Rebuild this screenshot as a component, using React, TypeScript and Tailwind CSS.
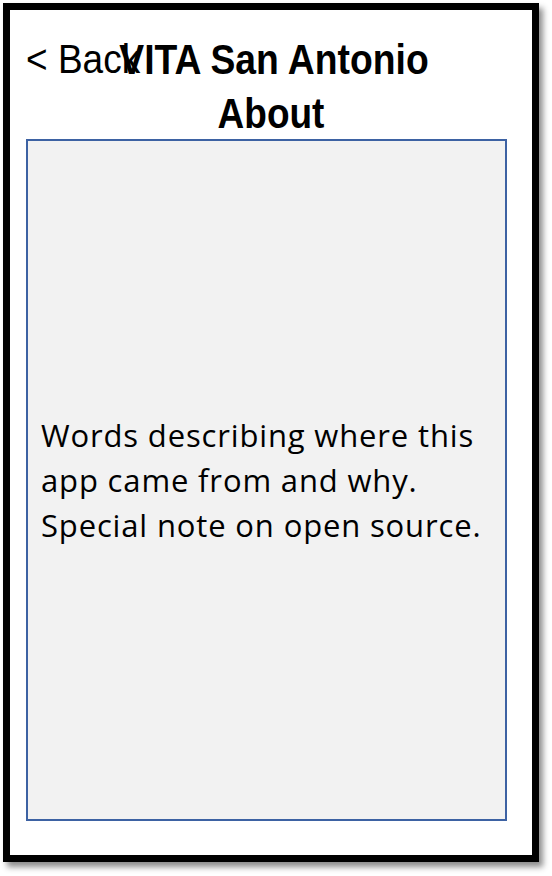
import React from "react";

export default function App() {
  return (
    <div className="w-[552px] h-[876px] bg-white overflow-hidden">
      <div className="ml-[3px] mt-[3px] w-[536px] h-[859px] border-[7px] border-black bg-white shadow-[4px_5px_6px_rgba(0,0,0,0.45)] relative flex flex-col pt-[19px] font-['Liberation_Sans',Arial,sans-serif] text-black">
        <div className="absolute left-[16px] top-[19px] h-[60px] leading-[60px] text-[37px] flex items-center">
          <span className="inline-block scale-y-[1.1] translate-y-[1px]">&lt; Back</span>
        </div>
        <div className="relative h-[60px] leading-[60px] text-center text-[37.3px] font-bold">
          <span className="inline-block scale-y-[1.12] translate-x-[3px]">VITA San Antonio</span>
        </div>
        <div className="h-[50px] leading-[50px] text-center text-[37px] font-bold">
          <span className="inline-block scale-y-[1.13]">About</span>
        </div>
        <div className="ml-[16px] w-[481px] h-[682px] border-2 border-[#3d62a3] bg-[#f2f2f2] flex items-center pl-[13px]">
          <p className="font-['Open_Sans','Noto_Sans',sans-serif] text-[31px] leading-[45px] tracking-[0.85px] text-black">
            <span className="block">Words describing where this</span>
            <span className="block">app came from and why.</span>
            <span className="block">Special note on open source.</span>
          </p>
        </div>
      </div>
    </div>
  );
}
